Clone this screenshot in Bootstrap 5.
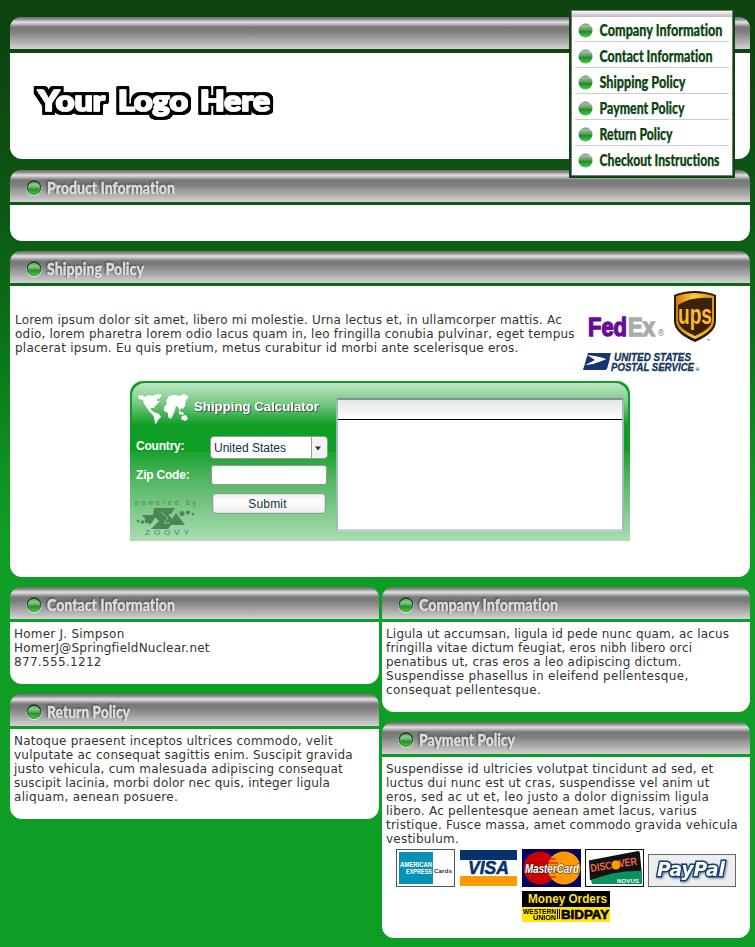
<!DOCTYPE html>
<html lang="en">
<head>
<meta charset="utf-8">
<meta name="viewport" content="width=device-width, initial-scale=1">
<title>Product Information</title>
<link href="https://cdn.jsdelivr.net/npm/bootstrap@5.3.0/dist/css/bootstrap.min.css" rel="stylesheet">
<style>
body{min-height:947px;background:linear-gradient(#0e4410 0,#0e4410 50px,#0c5a14 220px,#0b7019 330px,#0e9323 470px,#0f9e25 540px) #0f9e25;font:12px/14px "DejaVu Sans",sans-serif;color:#333;overflow:hidden}
svg{display:block;flex:none;overflow:visible}
.page{width:740px;margin-left:10px;padding-top:17px}
.bar{height:32px;border-radius:11px 11px 0 0;background:linear-gradient(#707070 0,#858585 2px,#dedede 5px,#d4d4d4 6px,#797979 10px,#7c7c7c 14px,#d2d2d2 32px);margin-bottom:3px}
.bar h2{margin:0;line-height:0}
.pane{background:#fff;border-radius:0 0 12px 12px}
.gap10{margin-bottom:10px}
.top-bar{margin-bottom:4px}.h-logo{height:106px;margin-bottom:11px}.h-prod{height:36px}.h-ship{height:291px}
.h-contact{height:62px}.h-return{height:90px}.h-company{height:90px}.h-pay{height:181px}
.txt{padding:5px 4px 0}
.txt span,.intro span{display:block;white-space:nowrap;height:14px;letter-spacing:.23px}
.txt .ls-a,.intro .ls-a{letter-spacing:.18px}
.intro .ls-c{letter-spacing:.21px}
.txt .ls-b{letter-spacing:.32px}
.menu{position:absolute;left:569px;top:9px;width:166px;height:169px;background:#0c4711;padding:1px 2px 2px}
.menu ul{border:1px solid #777;background:#fff;height:166px}
.menu li{height:26px;margin:0 3px;padding:2px 0 0 1px}
.menu .menu-top{height:6px;background:linear-gradient(#fff,#e4e4e4 2px,#bbb)}
.menu li+li{border-top:1px solid #ccc}
.menu .first-item{height:24px;padding-top:0;border-top:0}
.intro{width:565px;padding-left:5px}
.calc{width:500px;height:160px;border-radius:13px 13px 0 0;margin:4px auto 0;position:relative;background:linear-gradient(#0f9e25 70px,#1ba330 71px,#5cba6a 105px,#aaddb2 160px);font-family:"Liberation Sans",sans-serif}
.shine{position:absolute;left:2px;right:2px;top:2px;height:46px;border-radius:13px 13px 0 0;background:linear-gradient(#bde6c3,#78c985 20px,#0f9e25 42px)}
.calc-in{position:relative}
.lft{width:206px}
.lab{width:75px;color:#fff;font-weight:bold;font-size:12px;padding-left:6px;padding-bottom:3px;letter-spacing:-.2px}
.zip-row .lab{padding-bottom:0}
.sel{width:118px;height:23px;border:1px solid #8f9c91;border-radius:4px;background:linear-gradient(90deg,#fff 100px,#999 100px,#999 101px,#f2f2f2 101px);font-size:12px;color:#0b333c;padding-left:3px;margin-left:5px}
.zip{width:116px;height:20px;border:1px solid #8f9c91;border-radius:3px;background:#fff;margin-left:6px;padding:0}
.zip-row{padding-top:6px;padding-bottom:8px}
.sub{width:114px;height:21px;border:1px solid #8f9c91;outline:0;box-shadow:inset 0 0 0 1px #ddd;border-radius:4px;background:linear-gradient(#eee,#fff 40%,#eee);font-size:12px;color:#0b333c;line-height:18px;padding:0 3px 0 0;margin-left:82px;letter-spacing:.2px}
.res{width:288px;height:133px;margin-top:17px;border:2px solid #aab5ac;border-top-color:#80938a;border-bottom-color:#ccd;background:#fff}
.res div{height:20px;border-bottom:1px solid #000;background:linear-gradient(#e4e4e4,#fff)}
.powered{position:absolute;left:0;top:114px}
.w369{width:369px}.w368{width:368px}
.hd,.mn{font:900 17px Lato,sans-serif;font-variant-ligatures:none}
.hd{fill:#dcdcdc;stroke:#dcdcdc;stroke-width:.4px;filter:drop-shadow(-1px -1px 1px #444)}
.mn{font-size:16px;fill:#0d4510;stroke:#0d4510;stroke-width:.25px}
.logo-text{font:900 29px Lato,sans-serif;fill:#fff;stroke:#fff;stroke-width:1.6px;stroke-linejoin:round}
</style>
</head>
<body>
<svg width="0" height="0" class="position-absolute" aria-hidden="true">
<defs>
<linearGradient id="orb" x2="0" y2="1"><stop offset="0" stop-color="#4f7a50"/><stop offset=".12" stop-color="#a9bcaa"/><stop offset=".48" stop-color="#5a9a5c"/><stop offset=".55" stop-color="#1d8a22"/><stop offset="1" stop-color="#45d048"/></linearGradient>
<linearGradient id="orb2" x2="0" y2="1"><stop offset="0" stop-color="#5c9a5e"/><stop offset=".25" stop-color="#8fc791"/><stop offset=".5" stop-color="#4fa551"/><stop offset=".58" stop-color="#259229"/><stop offset="1" stop-color="#43cc43"/></linearGradient>
<linearGradient id="gold" x2="1" y2="0"><stop offset="0" stop-color="#c87d08"/><stop offset=".45" stop-color="#ffc840"/><stop offset="1" stop-color="#dd9510"/></linearGradient>
<filter id="outline" x="-5%" y="-30%" width="110%" height="160%"><feMorphology in="SourceAlpha" operator="dilate" radius="3" result="fat"/><feGaussianBlur in="fat" stdDeviation=".5" result="soft"/><feMerge><feMergeNode in="soft"/><feMergeNode in="soft"/><feMergeNode in="SourceGraphic"/></feMerge></filter>
<g id="ball"><circle cx="8" cy="8.600" r="7.600" fill="#dcdcdc"/><circle cx="8" cy="7.600" r="7.300" fill="#123c14"/><circle cx="8" cy="8.300" r="6.500" fill="url(#orb2)"/></g>
</defs>
</svg>

<nav class="menu"><ul class="list-unstyled m-0">
<li class="menu-top m-0 p-0"></li>
<li class="first-item"><svg width="152" height="24"><circle cx="9.500" cy="13.500" r="7" fill="url(#orb)"/><text class="mn" x="23.500" y="19" textLength="123" lengthAdjust="spacingAndGlyphs">Company Information</text></svg></li>
<li><svg width="152" height="23"><circle cx="9.500" cy="12.500" r="7" fill="url(#orb)"/><text class="mn" x="23.500" y="18" textLength="113" lengthAdjust="spacingAndGlyphs">Contact Information</text></svg></li>
<li><svg width="152" height="23"><circle cx="9.500" cy="12.500" r="7" fill="url(#orb)"/><text class="mn" x="23.500" y="18" textLength="86" lengthAdjust="spacingAndGlyphs">Shipping Policy</text></svg></li>
<li><svg width="152" height="23"><circle cx="9.500" cy="12.500" r="7" fill="url(#orb)"/><text class="mn" x="23.500" y="18" textLength="85" lengthAdjust="spacingAndGlyphs">Payment Policy</text></svg></li>
<li><svg width="152" height="23"><circle cx="9.500" cy="12.500" r="7" fill="url(#orb)"/><text class="mn" x="23.500" y="18" textLength="73" lengthAdjust="spacingAndGlyphs">Return Policy</text></svg></li>
<li><svg width="152" height="23"><circle cx="9.500" cy="12.500" r="7" fill="url(#orb)"/><text class="mn" x="23.500" y="18" textLength="120" lengthAdjust="spacingAndGlyphs">Checkout Instructions</text></svg></li>
</ul></nav>

<main class="page">
<div class="bar top-bar"></div>
<header class="pane h-logo"><svg width="300" height="100"><g class="logo-text" filter="url(#outline)"><text x="28" y="58" textLength="67" lengthAdjust="spacingAndGlyphs">Your</text><text x="108" y="58" textLength="70" lengthAdjust="spacingAndGlyphs">Logo</text><text x="190" y="58" textLength="70" lengthAdjust="spacingAndGlyphs">Here</text></g></svg></header>

<section class="gap10"><div class="bar"><h2><svg width="300" height="32"><use href="#ball" x="16" y="10"/><text class="hd" x="37" y="24" textLength="128" lengthAdjust="spacingAndGlyphs">Product Information</text></svg></h2></div><div class="pane h-prod"></div></section>

<section class="gap10"><div class="bar"><h2><svg width="300" height="32"><use href="#ball" x="16" y="10"/><text class="hd" x="37" y="24" textLength="97" lengthAdjust="spacingAndGlyphs">Shipping Policy</text></svg></h2></div>
<div class="pane h-ship">
<div class="d-flex align-items-center">
<div class="intro pt-1">
<span class="ls-a">Lorem ipsum dolor sit amet, libero mi molestie. Urna lectus et, in ullamcorper mattis. Ac</span>
<span class="ls-c">odio, lorem pharetra lorem odio lacus quam in, leo fringilla conubia pulvinar, eget tempus</span>
<span>placerat ipsum. Eu quis pretium, metus curabitur id morbi ante scelerisque eros.</span>
</div>
<svg width="160" height="91">
<text y="50" style="font:bold 26px 'Liberation Sans',sans-serif" stroke-width="1.400"><tspan x="13" textLength="39" lengthAdjust="spacingAndGlyphs" fill="#6a0a9c" stroke="#6a0a9c">Fed</tspan><tspan x="53" textLength="27" lengthAdjust="spacingAndGlyphs" fill="#aaa" stroke="#aaa">Ex</tspan></text>
<text x="82" y="50" font-size="8" fill="#888">®</text>
<path d="M99 9Q119 1 141 9V35Q141 47 120 56Q99 47 99 35Z" fill="#28180c"/>
<path d="M101 10Q119 4 139 10V35Q139 45 120 53Q101 45 101 35Z" fill="url(#gold)"/>
<path d="M103 19Q117 10 137 12V35Q136 43 120 50Q104 43 103 35Z" fill="#3b2108"/>
<text x="103" y="38" textLength="34" lengthAdjust="spacingAndGlyphs" style="font:bold 27px 'Liberation Sans',sans-serif" fill="#fdbb2d">ups</text>
<text x="131" y="57" font-size="5" fill="#522">™</text>
<path d="M13 67H36L31 84H8Z" fill="#14366f"/><path d="M12 69Q29 71 32 74Q29 77 10 79L20 74Z" fill="#fff"/><path d="M8 83Q22 76 35 72L32 83Z" fill="#14366f"/>
<g fill="#153560" stroke="#153560" stroke-width=".3" style="font:italic bold 10px 'Liberation Sans',sans-serif"><text x="39" y="75" textLength="77" lengthAdjust="spacingAndGlyphs">UNITED STATES</text><text x="36" y="85" textLength="83" lengthAdjust="spacingAndGlyphs">POSTAL SERVICE</text></g><text x="120" y="85" font-size="5" fill="#153560">®</text>
</svg>
</div>
<div class="calc"><div class="shine"></div><div class="calc-in d-flex">
<div class="lft">
<svg width="206" height="55"><g fill="#fff"><path d="M8 15L12 14 15 16 19 14 22 15 25 14 28 13 32 14 29 18 27 17 27 20 30 20 26 24 24 27 21 27 21 29 24 31 29 33 31 36 28 39 26 43 25 42 24 36 22 33 19 30 17 27 14 23 13 19 9 18Z"/><path d="M36 20L39 15 44 14 50 15 54 13 58 15 58 17 56 19 55 25 53 28 51 27 50 30 48 26 46 25 45 29 43 34 41 38 38 36 38 32 34 30 34 26 37 23Z"/><path d="M52 35L56 34 58 38 55 40 51 38ZM49 30L54 32 53 34 49 33Z"/></g><text x="64" y="30" textLength="125" lengthAdjust="spacingAndGlyphs" style="font:bold 13px 'Liberation Sans',sans-serif;fill:#fff;filter:drop-shadow(1px 1px 0 #555)">Shipping Calculator</text></svg>
<div class="d-flex align-items-center"><div class="lab">Country:</div><div class="sel d-flex align-items-center justify-content-between">United States<svg width="16" height="16"><path d="M4 6.500H10L7 10.500Z" fill="#243a3a"/></svg></div></div>
<div class="d-flex align-items-center zip-row"><div class="lab">Zip Code:</div><input class="zip" aria-label="Zip Code"></div>
<button class="sub d-block">Submit</button>
</div>
<div class="res"><div></div></div>
<svg class="powered" width="75" height="44"><g fill="#4a8658"><text x="5" y="10" textLength="61" style="font:7px 'Liberation Sans',sans-serif">powered by</text><path d="M24 13H45L41 19H38L42 24 46 18 55 30H41L38 34H21L29 26 23 20ZM12 20H27L20 30Z"/><circle cx="8" cy="26" r="1.300"/><circle cx="12.500" cy="27" r="1.800"/><circle cx="17" cy="26" r="2.300"/><circle cx="52" cy="18.500" r="2.500"/><circle cx="58" cy="17.500" r="2"/><circle cx="63" cy="19" r="1.300"/><text x="15" y="40" textLength="44" style="font:8px 'Liberation Sans',sans-serif">ZOOVY</text></g><path d="M31 17L38 23 34 28H40" fill="none" stroke="#83ca8f"/></svg>
</div></div>
</div></section>

<div class="d-flex justify-content-between">
<div class="w369">
<section class="gap10"><div class="bar"><h2><svg width="300" height="32"><use href="#ball" x="16" y="10"/><text class="hd" x="37" y="24" textLength="128" lengthAdjust="spacingAndGlyphs">Contact Information</text></svg></h2></div>
<div class="pane h-contact txt"><span>Homer J. Simpson</span><span>HomerJ@SpringfieldNuclear.net</span><span class="ls-b">877.555.1212</span></div></section>
<section><div class="bar"><h2><svg width="300" height="32"><use href="#ball" x="16" y="10"/><text class="hd" x="37" y="24" textLength="83" lengthAdjust="spacingAndGlyphs">Return Policy</text></svg></h2></div>
<div class="pane h-return txt"><span>Natoque praesent inceptos ultrices commodo, velit</span><span>vulputate ac consequat sagittis enim. Suscipit gravida</span><span>justo vehicula, cum malesuada adipiscing consequat</span><span class="ls-a">suscipit lacinia, morbi dolor nec quis, integer ligula</span><span class="ls-b">aliquam, aenean posuere.</span></div></section>
</div>
<div class="w368">
<section class="gap10"><div class="bar"><h2><svg width="300" height="32"><use href="#ball" x="16" y="10"/><text class="hd" x="37" y="24" textLength="139" lengthAdjust="spacingAndGlyphs">Company Information</text></svg></h2></div>
<div class="pane h-company txt"><span class="ls-a">Ligula ut accumsan, ligula id pede nunc quam, ac lacus</span><span class="ls-a">fringilla vitae dictum feugiat, eros nibh libero orci</span><span>penatibus ut, cras eros a leo adipiscing dictum.</span><span class="ls-b">Suspendisse phasellus in eleifend pellentesque,</span><span class="ls-b">consequat pellentesque.</span></div></section>
<section><div class="bar"><h2><svg width="300" height="32"><use href="#ball" x="16" y="10"/><text class="hd" x="37" y="24" textLength="96" lengthAdjust="spacingAndGlyphs">Payment Policy</text></svg></h2></div>
<div class="pane h-pay txt"><span>Suspendisse id ultricies volutpat tincidunt ad sed, et</span><span>luctus dui nunc est ut cras, suspendisse vel anim ut</span><span class="ls-b">eros, sed ac ut et, leo justo a dolor dignissim ligula</span><span>libero. Ac pellentesque aenean amet lacus, varius</span><span>tristique. Fusce massa, amet commodo gravida vehicula</span><span>vestibulum.</span>
<svg width="360" height="80" style="font-family:'Liberation Sans',sans-serif;font-weight:bold">
<rect x="10.500" y="3.500" width="58" height="37" fill="#fff" stroke="#555"/><path d="M13 6H47V38H13Z" fill="#0792b5"/><g font-size="7" fill="#fff"><text x="14" y="21" textLength="32" lengthAdjust="spacingAndGlyphs">AMERICAN</text><text x="20" y="28" textLength="26" lengthAdjust="spacingAndGlyphs">EXPRESS</text></g><text x="48" y="27" font-size="6" fill="#333" textLength="18" lengthAdjust="spacingAndGlyphs">Cards</text>
<rect x="74" y="4" width="57" height="36" fill="#fff"/><path d="M74 4H131V14H74Z" fill="#06316c"/><path d="M74 30H131V40H74Z" fill="#ff9a00"/><text x="82" y="28" textLength="41" lengthAdjust="spacingAndGlyphs" font-size="18" font-style="italic" fill="#06316c" stroke="#06316c" stroke-width=".5">VISA</text>
<rect x="136" y="3" width="59" height="38" fill="#000064"/><circle cx="154" cy="22" r="16.500" fill="#c00"/><circle cx="178" cy="22" r="16.500" fill="#ff9800"/><path d="M163 13H170M161 17H172M161 26H172M163 31H170" stroke="#c00"/><text x="139" y="27" textLength="54" lengthAdjust="spacingAndGlyphs" font-size="12" font-style="italic" fill="#fff" stroke="#222" stroke-width="1" paint-order="stroke">MasterCard</text>
<rect x="199.500" y="3.500" width="58" height="37" fill="#fff" stroke="#111"/><path d="M203 16Q202 14 205 14L252 5Q254 5 254 8L256 30 204 34Z" fill="#111"/><path d="M205 34Q230 24 256 25V38H206Z" fill="#08935f"/><circle cx="230" cy="19" r="4.500" fill="#f90"/><text transform="translate(205 26) rotate(-9)" textLength="47" lengthAdjust="spacingAndGlyphs" font-size="11" fill="#ee6844">DISC<tspan fill="#f90">O</tspan>VER</text><text x="231" y="37" font-size="6" fill="#fff" textLength="22">NOVUS</text>
<rect x="262.500" y="8.500" width="87" height="32" fill="#eee" stroke="#666"/><text x="271" y="30" textLength="68" lengthAdjust="spacingAndGlyphs" style="font:italic bold 20px 'DejaVu Sans',sans-serif;paint-order:stroke;filter:drop-shadow(1px 1px 1px #789)" fill="#fff" stroke="#123f75" stroke-width="3">PayPal</text>
<path d="M136 45H224V61H136Z" fill="#000"/><path d="M136 61H224V76H136Z" fill="#ffe40d"/><text x="142" y="57" textLength="79" font-size="13" fill="#ffe12b" lengthAdjust="spacingAndGlyphs">Money Orders</text><g font-size="7"><text x="137" y="68" textLength="33" lengthAdjust="spacingAndGlyphs">WESTERN</text><text x="147" y="74" textLength="23" lengthAdjust="spacingAndGlyphs">UNION</text></g><path d="M171.500 63V73M173.500 63V73" stroke="#000"/><text x="175" y="73" font-size="12" textLength="48" lengthAdjust="spacingAndGlyphs" stroke="#000" stroke-width=".6">BIDPAY</text>
</svg></div></section>
</div></div>
</main>
<script src="https://cdn.jsdelivr.net/npm/bootstrap@5.3.0/dist/js/bootstrap.bundle.min.js"></script>
</body>
</html>
